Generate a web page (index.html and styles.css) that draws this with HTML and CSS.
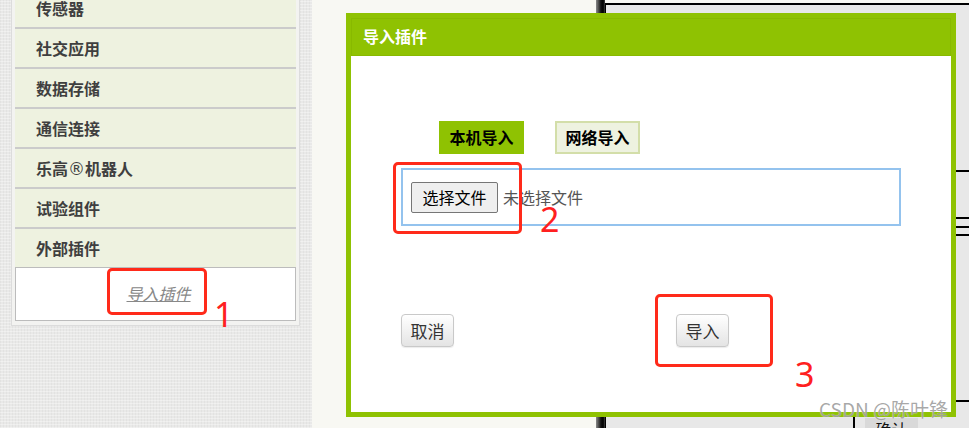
FILE: index.html
```html
<!DOCTYPE html>
<html lang="zh-CN">
<head>
    <meta charset="UTF-8">
    <title>导入插件</title>
    <link rel="stylesheet" href="styles.css">
</head>
<body>
    <div class="workspace">
        <aside class="palette">
            <div class="palette-panel">
                <ul class="drawer-list">
                    <li class="drawer">传感器</li>
                    <li class="drawer">社交应用</li>
                    <li class="drawer">数据存储</li>
                    <li class="drawer">通信连接</li>
                    <li class="drawer">乐高<span class="reg">®</span>机器人</li>
                    <li class="drawer">试验组件</li>
                    <li class="drawer">外部插件</li>
                </ul>
                <div class="import-box">
                    <a class="import-link">导入插件</a>
                </div>
            </div>
        </aside>

        <div class="viewer"></div>
        <div class="splitter"></div>

        <div class="blocks-pane">
            <div class="blocks-frame">
                <div class="frame-row row-a"></div>
                <div class="frame-row row-b"></div>
                <div class="frame-row row-c"></div>
                <div class="frame-row row-d"></div>
                <div class="frame-row row-e"></div>
                <div class="frame-foot">
                    <span class="foot-rule"></span>
                    <span class="confirm-btn">确认</span>
                </div>
            </div>
        </div>
    </div>

    <!-- import extension dialog -->
    <div class="dialog">
        <div class="dialog-header">导入插件</div>
        <div class="dialog-body">
            <div class="tabs">
                <span class="tab tab-active">本机导入</span>
                <span class="tab">网络导入</span>
            </div>
            <div class="file-box">
                <span class="file-btn">选择文件</span>
                <span class="file-name">未选择文件</span>
            </div>
            <div class="actions">
                <button type="button" class="btn">取消</button>
                <button type="button" class="btn btn-import">导入</button>
            </div>
        </div>
    </div>

    <!-- screenshot annotations -->
    <div class="mark mark-1"></div>
    <div class="mark mark-2"></div>
    <div class="mark mark-3"></div>
    <span class="step step-1">1</span>
    <span class="step step-2">2</span>
    <span class="step step-3">3</span>
    <span class="watermark">CSDN @陈叶锋</span>
</body>
</html>
```

FILE: styles.css
```css
body {
    margin: 0;
    height: 428px;
    overflow: hidden;
    font-family: "Noto Sans CJK SC", "Noto Sans", sans-serif;
    background-color: #f8f8f3;
}

.workspace {
    display: flex;
    height: 428px;
}

/* left palette */
.palette {
    width: 312px;
    flex-shrink: 0;
    background-color: #e9e9e8;
    background-image:
        repeating-linear-gradient(0deg, rgba(255, 255, 255, 0.35) 0 1px, transparent 1px 3px),
        repeating-linear-gradient(90deg, rgba(0, 0, 0, 0.03) 0 1px, transparent 1px 3px);
}

.palette-panel {
    margin: -15px 0 0 11px;
    width: 289px;
    box-sizing: border-box;
    padding: 3px 3px 4px 3px;
    border: 1px solid #dcdcdc;
    background-color: #f3f3f1;
}

.drawer-list {
    list-style: none;
    margin: 0;
    padding: 0;
}

.drawer {
    height: 38px;
    line-height: 38px;
    padding-left: 21px;
    background-color: #eef2e0;
    color: #3f3f3f;
    font-size: 16px;
    font-weight: bold;
}

.drawer + .drawer {
    border-top: 2px solid #cbcbcb;
}

.reg {
    font-family: "DejaVu Sans", sans-serif;
    font-weight: normal;
    font-size: 17px;
}

.import-box {
    height: 52px;
    line-height: 50px;
    border: 1px solid #bcbcbc;
    background-color: #fff;
    text-align: center;
}

.import-link {
    color: #888;
    font-size: 16px;
    font-style: italic;
    text-decoration: underline;
    padding-left: 6px;
}

.viewer {
    width: 284px;
    flex-shrink: 0;
    background-color: #f8f8f3;
}

.splitter {
    width: 9px;
    flex-shrink: 0;
    background: linear-gradient(to right, #8a8a8a, #4a4a4a 30%, #111 55%, #000 80%, #444);
}

/* right blocks area (mostly covered by the dialog) */
.blocks-pane {
    flex: 1;
    padding-top: 3px;
    background-color: #f8f8f3;
}

.blocks-frame {
    height: 425px;
    box-sizing: border-box;
    border-top: 2px solid #000;
    border-left: 1px solid #000;
    background-color: #e8e8e8;
}

.frame-row {
    border-bottom: 2px solid #000;
}

.row-a { height: 165px; }
.row-b { height: 45px; }
.row-c { height: 7px; }
.row-d { height: 6px; }
.row-e { height: 164px; }

.frame-foot {
    display: flex;
    padding: 15px 0 0 247px;
}

.foot-rule {
    width: 2px;
    height: 20px;
    background-color: #000;
}

.confirm-btn {
    margin: 1px 0 0 10px;
    width: 53px;
    height: 20px;
    background-color: #d9d9d9;
    text-align: center;
    font-size: 16px;
    line-height: 22px;
    color: #111;
}

/* dialog */
.dialog {
    position: absolute;
    left: 346px;
    top: 13px;
    width: 600px;
    height: 394px;
    border: 5px solid #8fc202;
    background-color: #fff;
}

.dialog-header {
    height: 38px;
    box-sizing: border-box;
    border: 1px solid #88b900;
    background-color: #8fc202;
    color: #fff;
    font-size: 16px;
    font-weight: bold;
    line-height: 34px;
    padding-left: 11px;
}

.dialog-body {
    padding: 65px 0 0 50px;
}

.tabs {
    display: flex;
    gap: 31px;
    margin-left: 38px;
}

.tab {
    width: 85px;
    height: 33px;
    box-sizing: border-box;
    border: 2px solid #d3dea9;
    background-color: #eef2e0;
    color: #000;
    font-size: 16px;
    font-weight: bold;
    line-height: 29px;
    text-align: center;
}

.tab-active {
    border-color: #8fc202;
    background-color: #8fc202;
}

.file-box {
    display: flex;
    align-items: center;
    margin-top: 14px;
    width: 500px;
    height: 58px;
    box-sizing: border-box;
    border: 2px solid #94c3ee;
    padding: 0 8px;
}

.file-btn {
    width: 87px;
    height: 31px;
    box-sizing: border-box;
    border: 1px solid #767676;
    border-radius: 2px;
    background-color: #efefef;
    color: #000;
    font-size: 16px;
    line-height: 29px;
    text-align: center;
}

.file-name {
    margin-left: 5px;
    color: #555;
    font-size: 16px;
}

.actions {
    display: flex;
    margin-top: 88px;
}

.btn {
    width: 53px;
    height: 33px;
    padding: 0;
    border: 1px solid #c9c9c9;
    border-radius: 4px;
    background: linear-gradient(#ffffff, #e4e4e4);
    box-shadow: 0 1px 1px rgba(0, 0, 0, 0.08);
    color: #333;
    font-family: "Noto Sans CJK SC", sans-serif;
    font-size: 17px;
}

.btn-import {
    margin-left: 222px;
}

/* red annotations drawn over the screenshot */
.mark {
    position: absolute;
    box-sizing: border-box;
    border: 3px solid #ff2a1a;
    border-radius: 5px;
}

.mark-1 { left: 107px; top: 268px; width: 100px; height: 47px; }
.mark-2 { left: 393px; top: 162px; width: 129px; height: 72px; }
.mark-3 { left: 655px; top: 294px; width: 118px; height: 73px; }

.step {
    position: absolute;
    font-family: "Noto Sans", sans-serif;
    font-size: 34px;
    line-height: 34px;
    color: #ff2020;
}

.step-1 { left: 214px; top: 297px; }
.step-2 { left: 540px; top: 202px; }
.step-3 { left: 795px; top: 357px; }

.watermark {
    position: absolute;
    left: 819px;
    top: 395px;
    font-size: 19px;
    color: rgba(110, 110, 110, 0.6);
    text-shadow: 0 0 1px rgba(255, 255, 255, 0.9);
}
```
